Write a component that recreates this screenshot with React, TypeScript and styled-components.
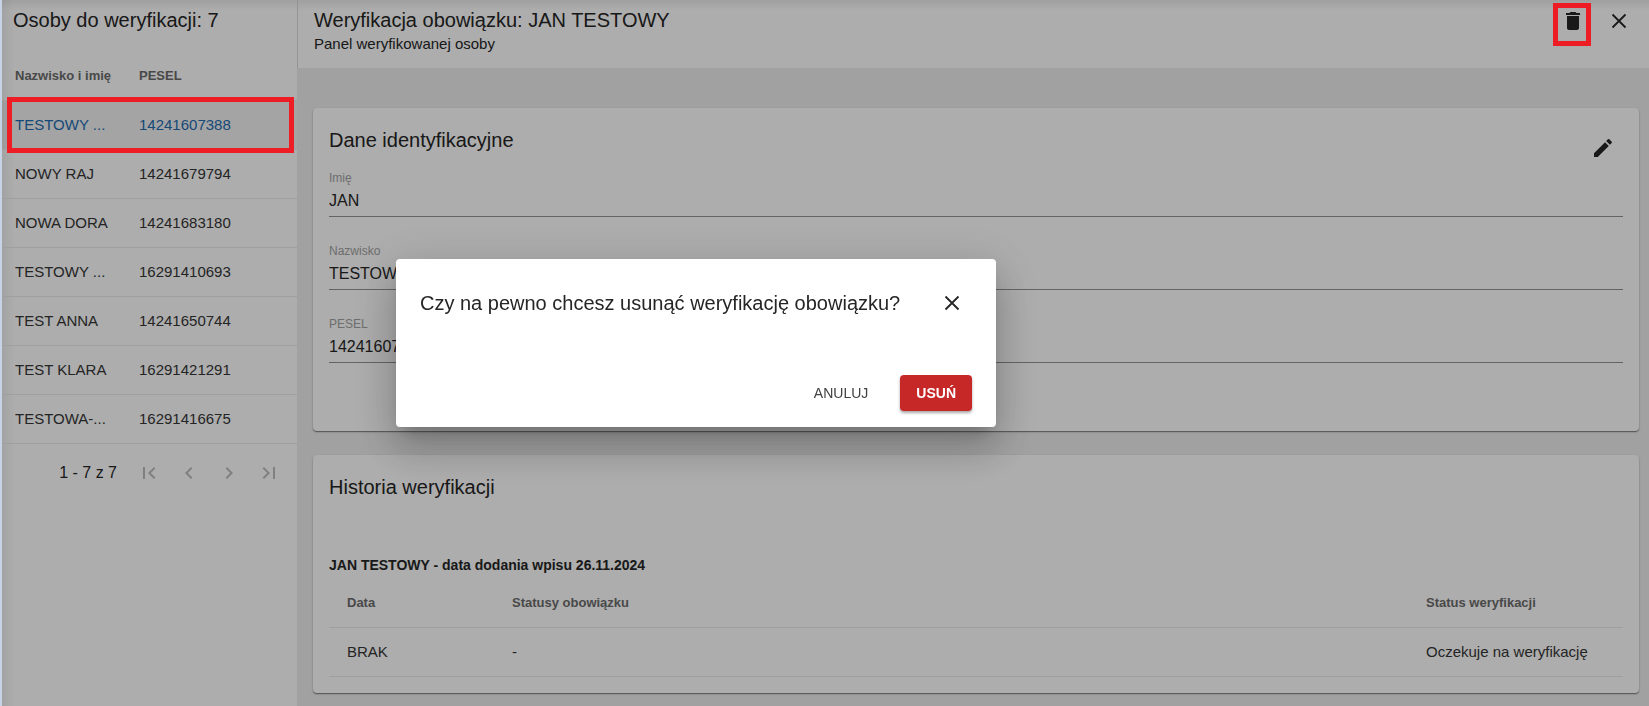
import React from "react";
import styled, { createGlobalStyle } from "styled-components";
import {
  MdDelete,
  MdEdit,
  MdFirstPage,
  MdChevronLeft,
  MdChevronRight,
  MdLastPage,
} from "react-icons/md";

const GlobalStyle = createGlobalStyle`
  *, *::before, *::after { box-sizing: border-box; }
  body {
    margin: 0;
    font-family: "Liberation Sans", Arial, sans-serif;
    font-size: 15px;
    line-height: 20px;
    color: #262626;
  }
  button, input { font: inherit; color: inherit; }
  h1, h2, h3, p { margin: 0; font-weight: 400; }
`;

const Page = styled.div`
  display: flex;
  min-height: 100vh;
  border-left: 2px solid #c6d3e7;
  background: #eeeeee;
`;

const Sidebar = styled.aside`
  flex: 0 0 295px;
  background:
    linear-gradient(to bottom, rgba(0, 0, 0, 0.08), transparent 10px),
    linear-gradient(to right, rgba(0, 0, 0, 0.06), transparent 12px),
    #ffffff;
`;

const Title = styled.h2`
  font-size: 20px;
  line-height: 24px;
`;

const SidebarHeader = styled.header`
  height: 51px;
  padding: 8px 11px;
`;

const DataTable = styled.table`
  width: 100%;
  border-collapse: separate;
  border-spacing: 0;
  table-layout: fixed;
  color: #363636;
`;

const HeadCell = styled.th<{ $width?: number; $inset: number }>`
  width: ${(p) => (p.$width ? `${p.$width}px` : "auto")};
  height: 50px;
  padding: 0 0 0 ${(p) => p.$inset}px;
  border-bottom: 1px solid #ebebeb;
  text-align: left;
  font-size: 13px;
  font-weight: 700;
  color: #6c6c6c;
`;

const Cell = styled.td<{ $inset: number }>`
  height: 49px;
  padding: 0 0 0 ${(p) => p.$inset}px;
  border-bottom: 1px solid #ebebeb;
  white-space: nowrap;
`;

const PersonRow = styled.tr<{ $selected: boolean }>`
  position: relative;
  color: ${(p) => (p.$selected ? "#1f6cb0" : "inherit")};
  background: ${(p) => (p.$selected ? "rgba(0, 0, 0, 0.05)" : "transparent")};
`;

const Highlight = styled.span<{ $inset: string }>`
  position: absolute;
  inset: ${(p) => p.$inset};
  z-index: 20;
  border: 5px solid #ee1c24;
  pointer-events: none;
`;

const Pagination = styled.nav`
  display: flex;
  justify-content: flex-end;
  align-items: center;
  padding: 9px 8px 0 0;
  font-size: 16px;
`;

const PageRange = styled.span`
  margin-right: 12px;
`;

const IconButton = styled.button`
  position: relative;
  display: flex;
  align-items: center;
  justify-content: center;
  flex: none;
  width: 40px;
  height: 40px;
  padding: 0;
  border: 0;
  background: transparent;
  font-size: 24px;

  &:disabled { color: #bdbdbd; }
`;

const Main = styled.main`
  flex: 1;
  min-width: 0;
`;

const MainHeader = styled.header`
  display: flex;
  justify-content: space-between;
  height: 68px;
  padding: 1px 10px 0 16px;
  border-left: 1px solid #dadada;
  background: linear-gradient(to bottom, rgba(0, 0, 0, 0.08), transparent 10px), #ffffff;
`;

const HeaderText = styled.div`
  display: grid;
  align-content: start;
  gap: 2px;
  padding-top: 7px;
`;

const HeaderActions = styled.div`
  display: flex;
  gap: 6px;
`;

const Cards = styled.div`
  display: grid;
  gap: 24px;
  padding: 40px 10px 12px 16px;
`;

const Card = styled.section`
  padding: 20px 16px 16px;
  border-radius: 4px;
  background: #ffffff;
  box-shadow: 0 1px 1px rgba(0, 0, 0, 0.4), 0 1px 3px rgba(0, 0, 0, 0.16);
`;

const CardHeader = styled.header<{ $height: number }>`
  display: flex;
  justify-content: space-between;
  height: ${(p) => p.$height}px;
`;

const Fields = styled.div`
  display: grid;
  gap: 26px;
  padding-bottom: 52px;
`;

const Field = styled.div`
  display: flex;
  flex-direction: column;
`;

const FieldLabel = styled.label`
  font-size: 12px;
  line-height: 16px;
  color: #a2a2a2;
`;

const FieldInput = styled.input`
  width: 100%;
  height: 31px;
  padding: 0;
  border: 0;
  border-bottom: 1px solid #949494;
  border-radius: 0;
  outline: 0;
  background: transparent;
  font-size: 16px;
`;

const EntryTitle = styled.h3`
  padding-bottom: 3px;
  font-size: 14px;
  font-weight: 700;
`;

const Backdrop = styled.div`
  position: fixed;
  inset: 0 0 0 2px;
  z-index: 10;
  display: flex;
  align-items: center;
  justify-content: center;
  padding: 0 259px 20px 0;
  background: rgba(0, 0, 0, 0.32);
`;

const Dialog = styled.div`
  width: 600px;
  padding: 24px 24px 16px;
  border-radius: 4px;
  background: #ffffff;
  box-shadow:
    0 11px 15px -7px rgba(0, 0, 0, 0.2),
    0 24px 38px 3px rgba(0, 0, 0, 0.14),
    0 9px 46px 8px rgba(0, 0, 0, 0.12);
`;

const DialogHeader = styled.div`
  display: flex;
  align-items: center;
  justify-content: space-between;
  height: 40px;
`;

const DialogActions = styled.div`
  display: flex;
  justify-content: flex-end;
  gap: 16px;
  padding-top: 52px;
`;

const ActionButton = styled.button<{ $danger?: boolean }>`
  height: 36px;
  padding: 0 16px;
  border: 0;
  border-radius: 4px;
  font-size: 14px;
  font-weight: ${(p) => (p.$danger ? 700 : 400)};
  color: ${(p) => (p.$danger ? "#ffffff" : "#404040")};
  background: ${(p) => (p.$danger ? "#c62828" : "transparent")};
  box-shadow: ${(p) => (p.$danger ? "0 2px 3px rgba(0, 0, 0, 0.35)" : "none")};
`;

const CloseIcon = () => (
  <svg width="24" height="24" viewBox="0 0 24 24" fill="none" stroke="currentColor" strokeWidth="1.8" aria-hidden="true">
    <path d="M5.5 5.5l13 13M18.5 5.5l-13 13" />
  </svg>
);

const people = [
  ["TESTOWY ...", "14241607388"],
  ["NOWY RAJ", "14241679794"],
  ["NOWA DORA", "14241683180"],
  ["TESTOWY ...", "16291410693"],
  ["TEST ANNA", "14241650744"],
  ["TEST KLARA", "16291421291"],
  ["TESTOWA-...", "16291416675"],
];

const fields = [
  { id: "imie", label: "Imię", value: "JAN" },
  { id: "nazwisko", label: "Nazwisko", value: "TESTOWY" },
  { id: "pesel", label: "PESEL", value: "14241607388" },
];

export default function App() {
  return (
    <>
      <GlobalStyle />
      <Page>
        <Sidebar>
          <SidebarHeader>
            <Title>Osoby do weryfikacji: 7</Title>
          </SidebarHeader>
          <DataTable>
            <thead>
              <tr>
                <HeadCell $width={124} $inset={13}>Nazwisko i imię</HeadCell>
                <HeadCell $inset={13}>PESEL</HeadCell>
              </tr>
            </thead>
            <tbody>
              {people.map(([name, pesel], i) => (
                <PersonRow key={pesel} $selected={i === 0}>
                  <Cell $inset={13}>{name}</Cell>
                  <Cell $inset={13}>
                    {pesel}
                    {i === 0 && <Highlight $inset="-4px 3px -3px 5px" />}
                  </Cell>
                </PersonRow>
              ))}
            </tbody>
          </DataTable>
          <Pagination aria-label="Stronicowanie">
            <PageRange>1 - 7 z 7</PageRange>
            <IconButton disabled aria-label="Pierwsza strona"><MdFirstPage /></IconButton>
            <IconButton disabled aria-label="Poprzednia strona"><MdChevronLeft /></IconButton>
            <IconButton disabled aria-label="Następna strona"><MdChevronRight /></IconButton>
            <IconButton disabled aria-label="Ostatnia strona"><MdLastPage /></IconButton>
          </Pagination>
        </Sidebar>
        <Main>
          <MainHeader>
            <HeaderText>
              <Title as="h1">Weryfikacja obowiązku: JAN TESTOWY</Title>
              <p>Panel weryfikowanej osoby</p>
            </HeaderText>
            <HeaderActions>
              <IconButton aria-label="Usuń weryfikację">
                <MdDelete />
                <Highlight $inset="2px 2px -5px 0" />
              </IconButton>
              <IconButton aria-label="Zamknij panel"><CloseIcon /></IconButton>
            </HeaderActions>
          </MainHeader>
          <Cards>
            <Card>
              <CardHeader $height={42}>
                <Title>Dane identyfikacyjne</Title>
                <IconButton aria-label="Edytuj dane"><MdEdit /></IconButton>
              </CardHeader>
              <Fields>
                {fields.map((f) => (
                  <Field key={f.id}>
                    <FieldLabel htmlFor={f.id}>{f.label}</FieldLabel>
                    <FieldInput id={f.id} value={f.value} readOnly />
                  </Field>
                ))}
              </Fields>
            </Card>
            <Card>
              <CardHeader $height={80}>
                <Title>Historia weryfikacji</Title>
              </CardHeader>
              <EntryTitle>JAN TESTOWY - data dodania wpisu 26.11.2024</EntryTitle>
              <DataTable>
                <thead>
                  <tr>
                    <HeadCell $width={165} $inset={18}>Data</HeadCell>
                    <HeadCell $inset={18}>Statusy obowiązku</HeadCell>
                    <HeadCell $width={215} $inset={18}>Status weryfikacji</HeadCell>
                  </tr>
                </thead>
                <tbody>
                  <tr>
                    <Cell $inset={18}>BRAK</Cell>
                    <Cell $inset={18}>-</Cell>
                    <Cell $inset={18}>Oczekuje na weryfikację</Cell>
                  </tr>
                </tbody>
              </DataTable>
            </Card>
          </Cards>
        </Main>
      </Page>
      <Backdrop>
        <Dialog role="dialog" aria-modal="true" aria-labelledby="dialog-title">
          <DialogHeader>
            <Title id="dialog-title">Czy na pewno chcesz usunąć weryfikację obowiązku?</Title>
            <IconButton aria-label="Zamknij"><CloseIcon /></IconButton>
          </DialogHeader>
          <DialogActions>
            <ActionButton>ANULUJ</ActionButton>
            <ActionButton $danger>USUŃ</ActionButton>
          </DialogActions>
        </Dialog>
      </Backdrop>
    </>
  );
}
